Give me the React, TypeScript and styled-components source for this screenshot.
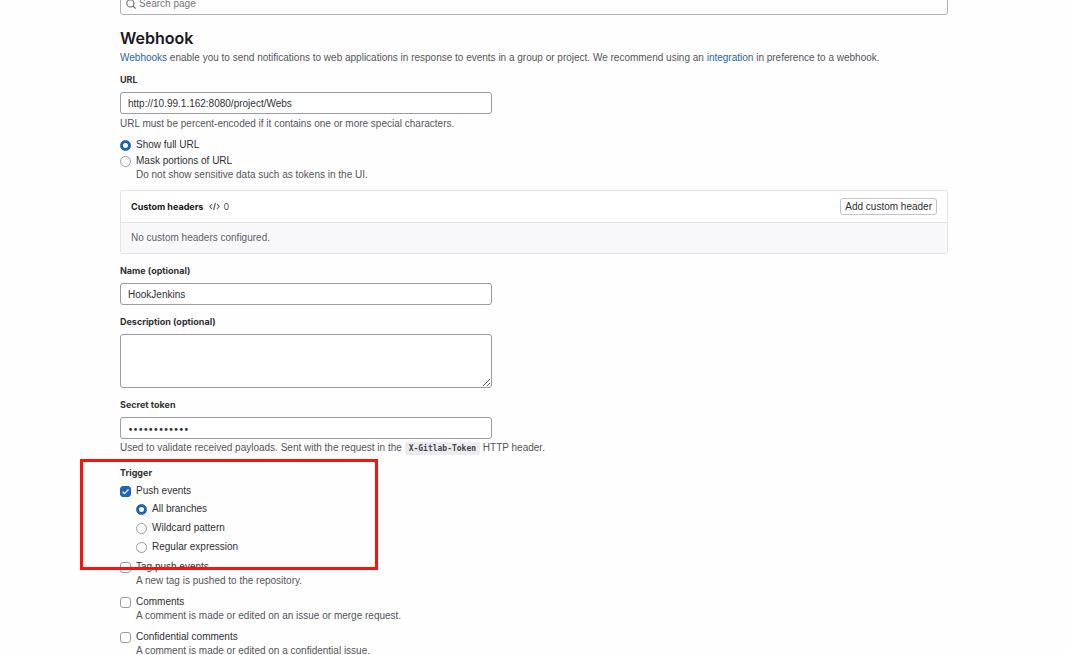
import React from "react";
import styled, { createGlobalStyle } from "styled-components";

const blue = "#1f63b5";
const grey = "#55555b";
const line = "#e4e4e8";
const control = "#9c9ca0";
const strong = `700 9px/14px Inter, "Liberation Sans", sans-serif`;

const GlobalStyle = createGlobalStyle`
  *, *::before, *::after { box-sizing: border-box; }
  body {
    margin: 0;
    background: #fefefe;
    color: #303035;
    font: 400 10px/14px "Liberation Sans", Arial, sans-serif;
  }
  input, textarea, button { font: inherit; color: inherit; margin: 0; }
`;

const Page = styled.main`
  padding: 0 118px 0 120px;
  overflow: hidden;
`;

const SearchBar = styled.label`
  display: flex;
  align-items: center;
  gap: 3px;
  height: 23px;
  margin-top: -8px;
  padding: 0 5px;
  border: 1px solid #b0b0b4;
  border-radius: 3px;
  color: #6a6a70;
  svg { flex: none; }
`;

const SearchInput = styled.input.attrs({ type: "search" })`
  flex: 1;
  border: 0;
  padding: 0;
  background: none;
  outline: none;
  &::placeholder { color: #77777c; opacity: 1; }
`;

const Title = styled.h1`
  margin: 13px 0 3px;
  font: 600 16px/20px Inter, "Liberation Sans", sans-serif;
  color: #18171d;
`;

const Intro = styled.p`
  margin: 0;
  color: ${grey};
`;

const Link = styled.a`
  color: ${blue};
  text-decoration: none;
`;

const Field = styled.div<{ $top?: number }>`
  display: flex;
  flex-direction: column;
  margin-top: ${(p) => p.$top ?? 10}px;
`;

const FieldLabel = styled.label`
  align-self: flex-start;
  margin-bottom: 5px;
  font: ${strong};
`;

const TextInput = styled.input`
  width: 100%;
  max-width: 372px;
  height: 22px;
  padding: 0 7px;
  border: 1px solid ${control};
  border-radius: 3px;
  background: #fff;
  &[type="password"] {
    font: 400 9px/14px Inter, "Liberation Sans", sans-serif;
  }
`;

const TextArea = styled.textarea`
  display: block;
  width: 100%;
  max-width: 372px;
  height: 54px;
  padding: 4px 7px;
  border: 1px solid ${control};
  border-radius: 3px;
  background: #fff;
  resize: vertical;
`;

const Help = styled.p<{ $gap?: number }>`
  margin: ${(p) => p.$gap ?? 0}px 0 0;
  color: ${grey};
`;

const Code = styled.code`
  padding: 2px 4px;
  border-radius: 3px;
  background: #ececef;
  color: #45454b;
  font: 700 8px/10px "DejaVu Sans Mono", monospace;
`;

const Choices = styled.fieldset<{ $top: number; $gap: number; $indent?: boolean }>`
  display: flex;
  flex-direction: column;
  gap: ${(p) => p.$gap}px;
  min-width: 0;
  margin: ${(p) => p.$top}px 0 0;
  padding: 0 0 0 ${(p) => (p.$indent ? 16 : 0)}px;
  border: 0;
`;

const ChoiceRow = styled.div`
  display: grid;
  grid-template-columns: 11px auto;
  column-gap: 5px;
  justify-content: start;
  align-items: center;
  p { grid-column: 2; line-height: 13px; }
`;

const Radio = styled.input.attrs({ type: "radio" })`
  appearance: none;
  width: 11px;
  height: 11px;
  border: 1px solid ${control};
  border-radius: 50%;
  background: #fff;
  &:checked {
    border-color: ${blue};
    background: radial-gradient(circle, #fff 2px, ${blue} 3px);
  }
`;

const CheckHolder = styled.span`
  display: grid;
  > * { grid-area: 1 / 1; }
  svg { pointer-events: none; }
`;

const Checkbox = styled.input.attrs({ type: "checkbox" })`
  appearance: none;
  width: 11px;
  height: 11px;
  border: 1px solid ${control};
  border-radius: 3px;
  background: #fff;
  &:checked { border-color: ${blue}; background: ${blue}; }
  &:not(:checked) + svg { visibility: hidden; }
`;

const Card = styled.section`
  margin-top: 9px;
  border: 1px solid ${line};
  border-radius: 3px;
  background: #fff;
`;

const CardHeader = styled.header`
  display: flex;
  align-items: center;
  height: 32px;
  padding: 0 10px;
  border-bottom: 1px solid ${line};
`;

const CardTitle = styled.h2`
  margin: 0 6px 0 0;
  font: ${strong};
  color: #18171d;
`;

const Count = styled.span`
  display: flex;
  align-items: center;
  gap: 3px;
  color: ${grey};
  font: 400 9px/14px Inter, "Liberation Sans", sans-serif;
`;

const SmallButton = styled.button`
  height: 17px;
  margin-left: auto;
  padding: 0 4px;
  border: 1px solid #c4c4c8;
  border-radius: 3px;
  background: #fff;
  line-height: 14px;
  white-space: nowrap;
`;

const CardBody = styled.p`
  margin: 0;
  padding: 8px 10px;
  border-radius: 0 0 3px 3px;
  background: #f8f8fb;
  color: #626168;
`;

const TriggerSection = styled.section`
  position: relative;
  margin-top: 11px;
`;

const SectionTitle = styled.h2`
  margin: 0;
  font: ${strong};
`;

const Highlight = styled.div`
  position: absolute;
  top: -7px;
  left: -40px;
  width: 298px;
  height: 111px;
  border: 3px solid #fb1208;
  pointer-events: none;
`;

function RadioChoice({ id, name, label, checked, help }: {
  id: string; name: string; label: string; checked?: boolean; help?: string;
}) {
  return (
    <ChoiceRow>
      <Radio id={id} name={name} defaultChecked={checked} />
      <label htmlFor={id}>{label}</label>
      {help && <Help>{help}</Help>}
    </ChoiceRow>
  );
}

function CheckChoice({ id, label, checked, help }: {
  id: string; label: string; checked?: boolean; help?: string;
}) {
  return (
    <ChoiceRow>
      <CheckHolder>
        <Checkbox id={id} defaultChecked={checked} />
        <svg width="11" height="11" viewBox="0 0 11 11" fill="none" stroke="#fff" strokeWidth="1.3" aria-hidden="true">
          <path d="M2.6 5.8 4.5 7.6 8.5 3.5" />
        </svg>
      </CheckHolder>
      <label htmlFor={id}>{label}</label>
      {help && <Help>{help}</Help>}
    </ChoiceRow>
  );
}

export default function App() {
  return (
    <Page>
      <GlobalStyle />
      <SearchBar>
        <svg width="10" height="10" viewBox="0 0 10 10" fill="none" stroke="currentColor" strokeWidth="1.1" aria-hidden="true">
          <circle cx="4.4" cy="4.4" r="3.6" />
          <path d="M7 7 9.6 9.6" />
        </svg>
        <SearchInput placeholder="Search page" aria-label="Search page" />
      </SearchBar>

      <Title>Webhook</Title>
      <Intro>
        <Link href="#webhooks">Webhooks</Link> enable you to send notifications to web applications in response to
        events in a group or project. We recommend using an <Link href="#integration">integration</Link> in preference
        to a webhook.
      </Intro>

      <Field $top={8}>
        <FieldLabel htmlFor="url">URL</FieldLabel>
        <TextInput id="url" type="text" defaultValue="http://10.99.1.162:8080/project/Webs" />
        <Help $gap={3}>URL must be percent-encoded if it contains one or more special characters.</Help>
      </Field>

      <Choices $top={7} $gap={2} aria-label="URL display">
        <RadioChoice id="show" name="mask" label="Show full URL" checked />
        <RadioChoice
          id="mask"
          name="mask"
          label="Mask portions of URL"
          help="Do not show sensitive data such as tokens in the UI."
        />
      </Choices>

      <Card>
        <CardHeader>
          <CardTitle>Custom headers</CardTitle>
          <Count>
            <svg width="11" height="9" viewBox="0 0 11 9" fill="none" stroke="currentColor" strokeWidth="1.1" aria-hidden="true">
              <path d="M3 2 .8 4.5 3 7M8 2l2.2 2.5L8 7M6.4 1 4.6 8" />
            </svg>
            0
          </Count>
          <SmallButton type="button">Add custom header</SmallButton>
        </CardHeader>
        <CardBody>No custom headers configured.</CardBody>
      </Card>

      <Field>
        <FieldLabel htmlFor="name">Name (optional)</FieldLabel>
        <TextInput id="name" type="text" defaultValue="HookJenkins" />
      </Field>
      <Field>
        <FieldLabel htmlFor="description">Description (optional)</FieldLabel>
        <TextArea id="description" />
      </Field>
      <Field>
        <FieldLabel htmlFor="token">Secret token</FieldLabel>
        <TextInput id="token" type="password" defaultValue="abcdefghijkl" />
        <Help $gap={2}>
          Used to validate received payloads. Sent with the request in the <Code>X-Gitlab-Token</Code> HTTP header.
        </Help>
      </Field>

      <TriggerSection>
        <SectionTitle>Trigger</SectionTitle>
        <Choices $top={4} $gap={0} aria-label="Trigger">
          <CheckChoice id="push" label="Push events" checked />
          <Choices $top={4} $gap={5} $indent aria-label="Branches">
            <RadioChoice id="all" name="branches" label="All branches" checked />
            <RadioChoice id="wildcard" name="branches" label="Wildcard pattern" />
            <RadioChoice id="regex" name="branches" label="Regular expression" />
          </Choices>
          <Choices $top={6} $gap={8} aria-label="Other events">
            <CheckChoice id="tag" label="Tag push events" help="A new tag is pushed to the repository." />
            <CheckChoice id="comments" label="Comments" help="A comment is made or edited on an issue or merge request." />
            <CheckChoice
              id="confidential"
              label="Confidential comments"
              help="A comment is made or edited on a confidential issue."
            />
          </Choices>
        </Choices>
        <Highlight />
      </TriggerSection>
    </Page>
  );
}
